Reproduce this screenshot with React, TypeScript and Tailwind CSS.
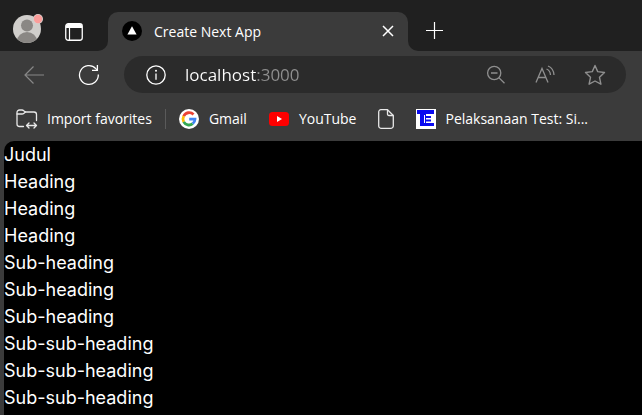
import React from "react";

const headings = [
  "Judul",
  "Heading",
  "Heading",
  "Heading",
  "Sub-heading",
  "Sub-heading",
  "Sub-heading",
  "Sub-sub-heading",
  "Sub-sub-heading",
  "Sub-sub-heading",
];

function ProfileIcon() {
  return (
    <svg width="32" height="32" viewBox="0 0 32 32" aria-hidden="true">
      <defs>
        <clipPath id="avatar-clip">
          <circle cx="15" cy="17" r="14" />
        </clipPath>
      </defs>
      <circle cx="15" cy="17" r="14" fill="#d0cecb" />
      <g clipPath="url(#avatar-clip)" fill="#8a8784">
        <circle cx="15" cy="13.5" r="6" />
        <ellipse cx="15" cy="29" rx="10" ry="9" />
      </g>
      <circle cx="26" cy="7" r="5" fill="#d9cfcc" />
      <circle cx="26" cy="7" r="4.2" fill="#fb9d9a" />
    </svg>
  );
}

function TabActionsIcon() {
  return (
    <svg width="18" height="18" viewBox="0 0 18 18" fill="none" aria-hidden="true">
      <rect x="0.75" y="0.75" width="16.5" height="16.5" rx="2.5" stroke="#fff" strokeWidth="1.3" />
      <path d="M1 5V3a2 2 0 0 1 2-2h12a2 2 0 0 1 2 2v2z" fill="#fff" />
      <path d="M4.5 5v12" stroke="#fff" strokeWidth="1.2" />
    </svg>
  );
}

function NextIcon() {
  return (
    <svg width="20" height="20" viewBox="0 0 20 20" aria-hidden="true">
      <circle cx="10" cy="10" r="10" fill="#000" />
      <path d="M10 5.2 14.6 13.500H5.4z" fill="#fff" />
    </svg>
  );
}

function CloseIcon() {
  return (
    <svg width="12" height="12" viewBox="0 0 12 12" aria-hidden="true">
      <path d="m1 1 10 10M11 1 1 11" stroke="#fff" strokeWidth="1.5" />
    </svg>
  );
}

function PlusIcon() {
  return (
    <svg width="17" height="17" viewBox="0 0 17 17" aria-hidden="true">
      <path d="M8.5 0v17M0 8.5h17" stroke="#fff" strokeWidth="1.2" />
    </svg>
  );
}

function BackIcon() {
  return (
    <svg width="20" height="20" viewBox="0 0 20 20" fill="none" aria-hidden="true">
      <path d="M9.5 1.5 1 10l8.5 8.5M1 10h19" stroke="#888" strokeWidth="1.2" />
    </svg>
  );
}

function RefreshIcon() {
  return (
    <svg width="22" height="22" viewBox="0 0 22 22" fill="none" aria-hidden="true">
      <path d="M20.3 10.5A9.4 9.4 0 1 1 17.8 4.6L19.5 6.3" stroke="#fff" strokeWidth="1.3" />
      <path d="M19.4 1v5.4H14" stroke="#fff" strokeWidth="1.3" />
    </svg>
  );
}

function InfoIcon() {
  return (
    <svg width="20" height="20" viewBox="0 0 20 20" fill="none" aria-hidden="true">
      <circle cx="10" cy="10" r="9.2" stroke="#fff" strokeWidth="1.3" />
      <path d="M10 8.5v6.3" stroke="#fff" strokeWidth="1.3" />
      <circle cx="10" cy="5.8" r="1" fill="#fff" />
    </svg>
  );
}

function ZoomOutIcon() {
  return (
    <svg width="20" height="20" viewBox="0 0 20 20" fill="none" stroke="#8f8f8f" strokeWidth="1.3" aria-hidden="true">
      <circle cx="8.2" cy="8" r="6.6" />
      <path d="M5 8h6.5M12.8 12.6l5.7 5.7" />
    </svg>
  );
}

function ReadAloudIcon() {
  return (
    <svg width="20" height="20" viewBox="0 0 20 20" fill="none" stroke="#8f8f8f" strokeWidth="1.3" aria-hidden="true">
      <path d="M1 17.5 7 3.500l6 14M3 12.5h8" />
      <path d="M11.500 4C14 5 15.300 7 15.500 10M13 1c3.800 1.600 5.800 4.700 6 9" />
    </svg>
  );
}

function StarIcon() {
  return (
    <svg width="22" height="22" viewBox="0 0 22 22" fill="none" aria-hidden="true">
      <path
        d="M11 1.500 13.700 7.600 20.500 8.500 15.500 13.300 16.900 20.200 11 17 5.100 20.200 6.500 13.300 1.500 8.500 8.300 7.600z"
        stroke="#8f8f8f"
        strokeWidth="1.4"
        strokeLinejoin="round"
      />
    </svg>
  );
}

function ImportIcon() {
  return (
    <svg width="22" height="20" viewBox="0 0 22 20" fill="none" stroke="#e8e8e8" strokeWidth="1.3" strokeLinecap="round" strokeLinejoin="round" aria-hidden="true">
      <path d="M7.500 17.500H3.500A2.500 2.500 0 0 1 1 15V3.500A2.500 2.500 0 0 1 3.500 1H6q1 0 1.700.7L9.500 3H18A2.500 2.500 0 0 1 20.500 5.500v6" />
      <path d="M1 5h5q1 0 1.700-.6L9.500 3" />
      <path d="M10.500 16.500h10M13 14l-2.500 2.500L13 19M18 14l2.500 2.500L18 19" />
    </svg>
  );
}

function GoogleIcon() {
  return (
    <svg width="20" height="20" viewBox="0 0 20 20" aria-hidden="true">
      <circle cx="10" cy="10" r="10" fill="#fff" />
      <g fill="none" strokeWidth="2.800">
        <path d="M14.500 5.500A6 6 0 0 0 4.700 7.200" stroke="#ea4335" />
        <path d="M4.700 7.200a6 6 0 0 0 0 5.600" stroke="#fbbc05" />
        <path d="M4.700 12.800a6 6 0 0 0 9 1.900" stroke="#34a853" />
        <path d="M13.700 14.700A6 6 0 0 0 16 10.200H10.200" stroke="#4285f4" />
      </g>
    </svg>
  );
}

function YouTubeIcon() {
  return (
    <svg width="20" height="14" viewBox="0 0 20 14" aria-hidden="true">
      <rect width="20" height="14" rx="3.500" fill="#f00" />
      <path d="m8 4 5 3-5 3z" fill="#fff" />
    </svg>
  );
}

function PageIcon() {
  return (
    <svg width="16" height="20" viewBox="0 0 16 20" fill="none" stroke="#e8e8e8" strokeWidth="1.300" strokeLinejoin="round" aria-hidden="true">
      <path d="M9.500.700H3A2.200 2.200 0 0 0 .700 3v14A2.200 2.200 0 0 0 3 19.300h10a2.200 2.200 0 0 0 2.300-2.300V6.500z" />
      <path d="M9.500.700V5q0 1.500 1.500 1.500h4.300" />
    </svg>
  );
}

function TestIcon() {
  return (
    <svg width="20" height="20" viewBox="0 0 20 20" aria-hidden="true">
      <path d="M0 0h20v20H0z" fill="#fff" />
      <path d="M1 1h17v4H9v9h9v3H4V5H1z" fill="#0808f0" />
      <path d="M10 7h5v2h-5zM10 10.500h5v2h-5z" fill="#0808f0" />
      <path d="M9 5h1v9H9z" fill="#0808f0" />
      <path d="M8 6h1v8H8z" fill="#fff" />
    </svg>
  );
}

function TabStrip() {
  return (
    <header className="flex h-[51px]">
      <div className="flex w-[108px] shrink-0 items-center gap-[21px] rounded-br-[10px] bg-[#202020] pt-3 pl-3">
        <button aria-label="Profile" className="-mt-[7px]">
          <ProfileIcon />
        </button>
        <button aria-label="Tab actions">
          <TabActionsIcon />
        </button>
      </div>
      <div className="w-[300px] shrink bg-[#202020] pt-3">
        <div className="flex h-full items-center rounded-t-[10px] bg-[#3b3b3b] px-[14px] pb-px">
          <NextIcon />
          <span className="ml-3 flex-1 truncate">Create Next App</span>
          <button aria-label="Close tab">
            <CloseIcon />
          </button>
        </div>
      </div>
      <div className="flex flex-1 items-center rounded-bl-[10px] bg-[#202020] pt-[10px] pl-[18px]">
        <button aria-label="New tab">
          <PlusIcon />
        </button>
      </div>
    </header>
  );
}

function Toolbar() {
  return (
    <div className="flex items-center pt-[5px] pr-4">
      <button aria-label="Back" className="ml-6">
        <BackIcon />
      </button>
      <button aria-label="Refresh" className="mr-6 ml-[34px]">
        <RefreshIcon />
      </button>
      <div className="flex h-[37px] min-w-0 flex-1 items-center rounded-full bg-[#2b2b2b] pr-5 pl-[22px]">
        <button aria-label="Site information">
          <InfoIcon />
        </button>
        <input
          aria-label="Address"
          defaultValue="localhost:3000"
          className="ml-[19px] min-w-0 flex-1 bg-[linear-gradient(to_right,#fff_71px,#8f8f8f_71px)] bg-clip-text text-[17px] leading-6 text-transparent caret-white outline-none"
        />
        <div className="flex items-center gap-[29px]">
          <button aria-label="Zoom out">
            <ZoomOutIcon />
          </button>
          <button aria-label="Read aloud">
            <ReadAloudIcon />
          </button>
          <button aria-label="Add to favorites">
            <StarIcon />
          </button>
        </div>
      </div>
    </div>
  );
}

function FavoritesBar() {
  return (
    <nav aria-label="Favorites" className="flex h-12 items-center pt-[3px] pl-4 whitespace-nowrap">
      <button className="flex items-center gap-[9px]">
        <ImportIcon />
        Import favorites
      </button>
      <span className="mx-[13px] h-5 w-px bg-[#5a5a5a]" />
      <a href="#gmail" className="flex items-center gap-[10px]">
        <GoogleIcon />
        Gmail
      </a>
      <a href="#youtube" className="ml-[22px] flex items-center gap-[10px]">
        <YouTubeIcon />
        YouTube
      </a>
      <a href="#page" aria-label="Page" className="ml-[22px]">
        <PageIcon />
      </a>
      <a href="#test" className="ml-[22px] flex items-center gap-[9px]">
        <TestIcon />
        Pelaksanaan Test: Si...
      </a>
    </nav>
  );
}

export default function App() {
  return (
    <div className="flex h-screen flex-col overflow-hidden bg-[#3b3b3b] font-['Open_Sans',sans-serif] text-[14px] text-white">
      <TabStrip />
      <Toolbar />
      <FavoritesBar />
      <main className="ml-1 flex-1 rounded-tl-[10px] bg-black font-[Inter,sans-serif] text-[18px] leading-[27px]">
        {headings.map((text, index) => (
          <p key={index}>{text}</p>
        ))}
      </main>
    </div>
  );
}
